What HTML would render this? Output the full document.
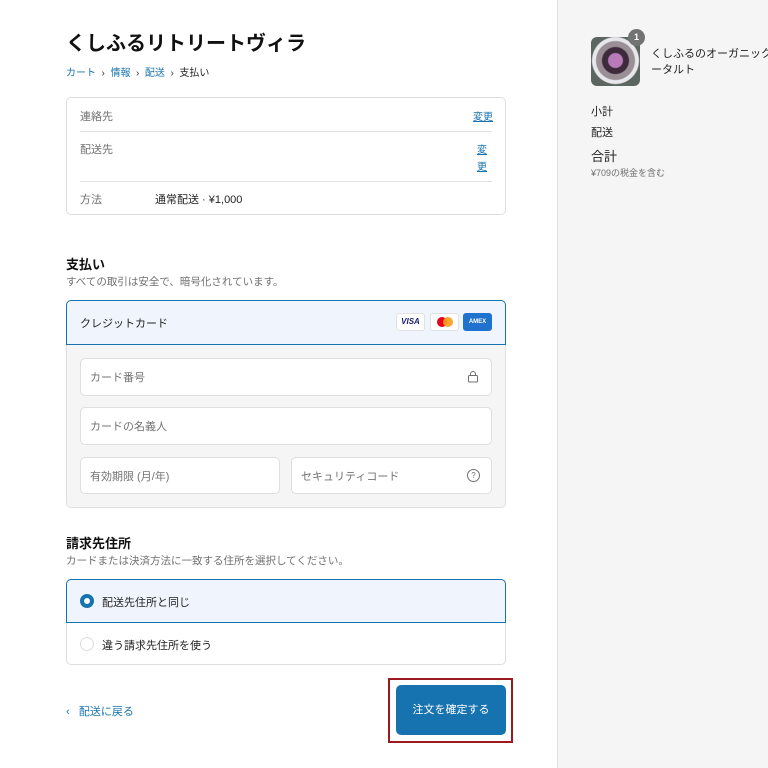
<!DOCTYPE html><html><head><meta charset="utf-8"><style>
*{margin:0;padding:0;box-sizing:border-box}
body{width:768px;height:768px;background:#fff;font-family:"Liberation Sans","Noto Sans CJK JP",sans-serif;color:#333;position:relative;overflow:hidden}
.a{position:absolute;white-space:nowrap}
.inp{position:absolute;background:#fff;border:1px solid #dedede;border-radius:5px;font-size:11px;color:#737373;padding-left:9px;display:flex;align-items:center}
.blue{color:#1773b0}
</style></head><body>
<div class="a" style="left:557px;top:0;width:211px;height:768px;background:#f5f5f5;border-left:1px solid #e1e1e1"></div>
<div class="a" style="left:66px;top:27px;font-size:20px;font-weight:bold;color:#111">くしふるリトリートヴィラ</div>
<div class="a" style="left:66px;top:64px;font-size:10px"><span class="blue">カート</span>&nbsp;&nbsp;›&nbsp;&nbsp;<span class="blue">情報</span>&nbsp;&nbsp;›&nbsp;&nbsp;<span class="blue">配送</span>&nbsp;&nbsp;›&nbsp;&nbsp;<span style="color:#222">支払い</span></div>
<div class="a" style="left:66px;top:97px;width:440px;height:118px;border:1px solid #dedede;border-radius:5px"></div>
<div class="a" style="left:80px;top:131px;width:412px;height:1px;background:#e1e1e1"></div>
<div class="a" style="left:80px;top:181px;width:412px;height:1px;background:#e1e1e1"></div>
<div class="a" style="left:80px;top:108px;font-size:11px;color:#707070">連絡先</div>
<div class="a blue" style="left:473px;top:108px;font-size:10px;text-decoration:underline">変更</div>
<div class="a" style="left:80px;top:141px;font-size:11px;color:#707070">配送先</div>
<div class="a blue" style="left:477px;top:142px;font-size:10px;line-height:17px;white-space:normal;width:12px;text-decoration:underline">変更</div>
<div class="a" style="left:80px;top:191px;font-size:11px;color:#707070">方法</div>
<div class="a" style="left:155px;top:191px;font-size:11px;color:#222">通常配送 · ¥1,000</div>

<div class="a" style="left:66px;top:254px;font-size:13px;font-weight:bold;color:#111">支払い</div>
<div class="a" style="left:66px;top:274px;font-size:10.5px;color:#707070">すべての取引は安全で、暗号化されています。</div>
<div class="a" style="left:66px;top:344px;width:440px;height:164px;background:#f5f5f5;border:1px solid #dedede;border-top:none;border-radius:0 0 5px 5px"></div>
<div class="a" style="left:66px;top:300px;width:440px;height:45px;background:#f0f5fd;border:1px solid #1773b0;border-radius:5px 5px 0 0"></div>
<div class="a" style="left:80px;top:315px;font-size:11px;color:#222">クレジットカード</div>
<div class="a" style="left:396px;top:313px;width:29px;height:18px;background:#fff;border:1px solid #e1e1e1;border-radius:3px;font-size:8px;font-weight:bold;color:#1a1f71;text-align:center;line-height:16px;font-style:italic">VISA</div>
<div class="a" style="left:430px;top:313px;width:29px;height:18px;background:#fff;border:1px solid #e1e1e1;border-radius:3px"><div class="a" style="left:6px;top:3px;width:10px;height:10px;border-radius:50%;background:#eb001b"></div><div class="a" style="left:12px;top:3px;width:10px;height:10px;border-radius:50%;background:#f79e1b;opacity:.9"></div></div>
<div class="a" style="left:463px;top:313px;width:29px;height:18px;background:#1f72cd;border-radius:3px;font-size:6px;color:#fff;text-align:center;line-height:18px;font-weight:bold">AMEX</div>
<div class="inp" style="left:80px;top:358px;width:412px;height:38px">カード番号</div>
<svg class="a" style="left:467px;top:370px" width="12" height="13" viewBox="0 0 12 13"><rect x="1.5" y="5.5" width="9" height="6.5" rx="1" fill="none" stroke="#707070"/><path d="M3.5 5.5V4a2.5 2.5 0 0 1 5 0v1.5" fill="none" stroke="#707070"/></svg>
<div class="inp" style="left:80px;top:407px;width:412px;height:38px">カードの名義人</div>
<div class="inp" style="left:80px;top:457px;width:200px;height:37px">有効期限 (月/年)</div>
<div class="inp" style="left:291px;top:457px;width:201px;height:37px">セキュリティコード</div>
<div class="a" style="left:467px;top:469px;width:13px;height:13px;border:1px solid #707070;border-radius:50%;font-size:8px;text-align:center;line-height:11px;color:#707070">?</div>

<div class="a" style="left:66px;top:533px;font-size:13px;font-weight:bold;color:#111">請求先住所</div>
<div class="a" style="left:66px;top:553px;font-size:10.5px;color:#707070">カードまたは決済方法に一致する住所を選択してください。</div>
<div class="a" style="left:66px;top:579px;width:440px;height:86px;border:1px solid #dedede;border-radius:5px"></div>
<div class="a" style="left:66px;top:579px;width:440px;height:44px;background:#f0f5fd;border:1px solid #1773b0;border-radius:5px 5px 0 0"></div>
<div class="a" style="left:80px;top:594px;width:14px;height:14px;border-radius:50%;border:4px solid #1773b0;background:#fff"></div>
<div class="a" style="left:102px;top:594px;font-size:11px;color:#222">配送先住所と同じ</div>
<div class="a" style="left:80px;top:637px;width:14px;height:14px;border-radius:50%;border:1px solid #dedede;background:#fff"></div>
<div class="a" style="left:102px;top:637px;font-size:11px;color:#222">違う請求先住所を使う</div>

<div class="a blue" style="left:66px;top:703px;font-size:11px">‹&nbsp;&nbsp;&nbsp;配送に戻る</div>
<div class="a" style="left:388px;top:678px;width:125px;height:65px;border:2px solid #9b1a1f"></div>
<div class="a" style="left:396px;top:685px;width:110px;height:50px;background:#1773b0;border-radius:5px;color:#fff;font-size:11px;text-align:center;line-height:50px">注文を確定する</div>

<div class="a" style="left:591px;top:37px;width:49px;height:49px;border-radius:6px;background:radial-gradient(circle at 50% 48%,#b87ab8 0 7px,#3d2a3a 8px 13px,#9a8f95 14px 19px,#e8e8ec 20px 23px,#5b6660 24px)"></div>
<div class="a" style="left:628px;top:29px;width:17px;height:17px;border-radius:50%;background:#737373;color:#fff;font-size:9px;font-weight:bold;text-align:center;line-height:17px">1</div>
<div class="a" style="left:651px;top:46px;font-size:11px;color:#222;line-height:16px">くしふるのオーガニック<br>ータルト</div>
<div class="a" style="left:591px;top:103px;font-size:11px;color:#222">小計</div>
<div class="a" style="left:591px;top:124px;font-size:11px;color:#222">配送</div>
<div class="a" style="left:591px;top:146px;font-size:13px;color:#222">合計</div>
<div class="a" style="left:591px;top:166px;font-size:9px;color:#707070">¥709の税金を含む</div>
</body></html>
